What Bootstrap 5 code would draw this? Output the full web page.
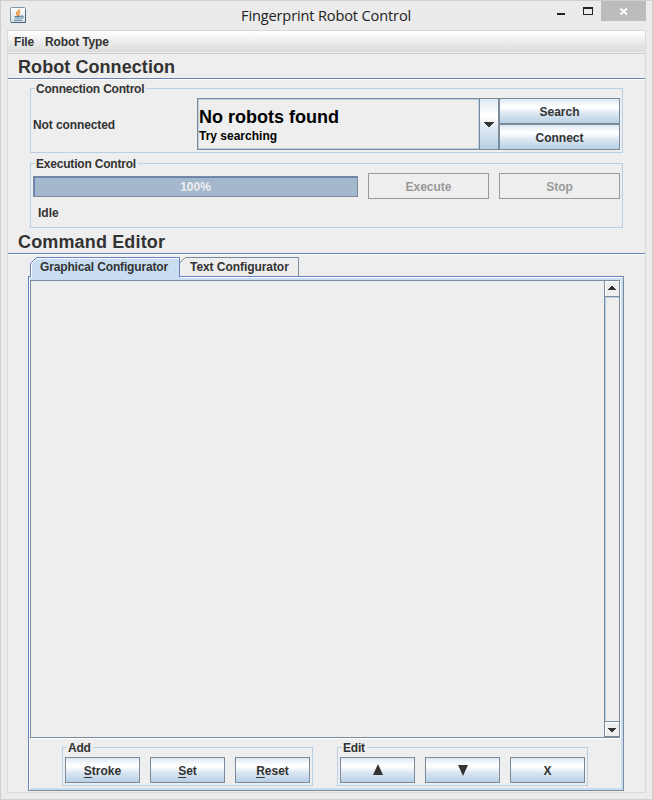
<!DOCTYPE html>
<html lang="en">
<head>
<meta charset="utf-8">
<meta name="viewport" content="width=device-width, initial-scale=1">
<title>Fingerprint Robot Control</title>
<link href="https://cdn.jsdelivr.net/npm/bootstrap@5.3.0/dist/css/bootstrap.min.css" rel="stylesheet">
<style>
:root{--steel:#7a8a99;--blue:#6382bf;--pale:#b8cfe5;--tabfill:#c8ddf2;--face:#eee;--ink:#333}
body{width:653px;height:800px;overflow:hidden;background:#ebebeb;font:bold 12px/14px "Liberation Sans",Arial,sans-serif;color:var(--ink)}
svg{display:block;flex:none}
.win{width:653px;height:800px;border:1px solid #cfcfcf;padding:0 6px 6px}
.titlebar{height:29px}
.app-icon{margin:6px 0 0 3px}
.win-title{font:14.6px/20px "Open Sans","Noto Sans",sans-serif;color:#222;padding-top:4px;letter-spacing:-.15px;left:234px;white-space:nowrap}
.win-ctl{height:20px}
.win-close{width:45px;height:20px;background:#bcbcbc;margin:0 0 0 7px}
.client{height:763px;border:1px solid #d9d9d9;background:var(--face)}
.menu-strip{height:23px;background:linear-gradient(#fff,#dadada 21px,#eee 21px);border-bottom:1px solid #ccc;padding:4px 0 0 6px;gap:11px;letter-spacing:-.15px}
.section-head{font-size:18px;line-height:22px;height:25px;padding:2px 0 0 10px;border-bottom:1px solid var(--blue);box-shadow:0 1px #fff;letter-spacing:.07px}
.group{border:1px solid var(--pale)}
.group-label{display:block;width:max-content;height:14px;margin:-7px 0 0 4px;padding:0 2px 0 1px;background:var(--face);white-space:nowrap;letter-spacing:-.2px}
.jbtn{border:1px solid var(--steel);border-radius:0;height:26px;padding:2px 0 0;font:inherit;line-height:22px;color:var(--ink);background:linear-gradient(#dde8f3 0,#fff 30%,#fff 36%,#dde8f3 58%,#b8cfe5 100%)}
.jbtn:hover{color:var(--ink);border-color:var(--steel)}
.jbtn.off{border-color:#999;color:#999;background:var(--face)}
.move-up{padding:0 0 1px}
.move-down{padding:1px 0 0}
.w121{width:121px}.w75{width:75px}
.g-conn{margin:9px 0 0 22px;width:593px;height:65px}
.g-exec{margin:10px 0 0 22px;width:593px;height:65px}
.conn-row{margin:2px 2px 0;height:52px}
.conn-status{width:164px;padding-top:2px;letter-spacing:-.1px}
.combo{width:302px;height:52px;border:1px solid var(--steel)}
.combo-text{border:1px solid var(--pale);width:281px;color:#000;padding:7px 0 0 0}
.combo-big{font-size:18px;line-height:21px}
.combo-small{line-height:16px}
.combo-arrow{width:19px;border-left:1px solid var(--steel);background:linear-gradient(#dde8f3 0,#fff 30%,#fff 36%,#dde8f3 58%,#b8cfe5 100%)}
.exec-row{margin:2px 2px 0;gap:10px}
.jbar{width:325px;height:21px;border:1px solid var(--steel);border-radius:0;background:#a3b8cc;box-shadow:inset 1px 1px var(--blue);color:#eee;line-height:19px;margin-top:3px;padding-top:1px}
.idle{margin:7px 0 0 7px}
.sec2{margin-top:2px;height:24px;line-height:21px;letter-spacing:.15px}
.tabs{height:19px;margin:3px 0 0 22px}
.jtab{height:19px;line-height:21px;letter-spacing:-.06px}
.jtab svg{left:0;top:0}
.jtab span{position:relative;left:10px}
.tab-a{width:150px;height:21px;z-index:2;letter-spacing:-.15px}
.tab-b{width:119px}
.pane{margin-left:20px;width:596px;height:515px;border:1px solid;border-color:var(--blue) var(--steel) var(--steel) var(--blue);box-shadow:inset 1px 1px #fff,inset 0 3px var(--tabfill),inset -2px -2px var(--tabfill);padding:3px 3px 0 1px}
.scrollpane{width:590px;height:458px;border:1px solid var(--steel);box-shadow:1px 1px #fff}
.sbar{width:15px;border-left:1px solid var(--steel)}
.sbtn{height:16px;border-bottom:1px solid var(--steel);box-shadow:inset 1px 1px #fff}
.strack{box-shadow:inset 1px 1px var(--pale)}
.sbtn.low{border-top:1px solid var(--steel)}
.bottom{padding:9px 0 0 32px;gap:24px}
.g-btns{width:251px;height:39px}
.btn-row{gap:10px;margin:2px 2px 0}
u{text-underline-offset:2px;text-decoration-thickness:1px}
</style>
</head>
<body>
<div class="win">
  <header class="titlebar d-flex justify-content-between position-relative">
    <svg class="app-icon" width="16" height="16" viewBox="0 0 16 16"><defs><linearGradient id="ig" x2="0" y2="1"><stop stop-color="#fff"/><stop offset="1" stop-color="#d5dee5"/></linearGradient></defs><rect x=".5" y=".5" width="15" height="15" rx="1" fill="url(#ig)" stroke="#8295a4"/><path d="M1 15.5H15.5V3" fill="none" stroke="#49657b"/><path d="M9.500 2C10 4 6 4.500 6.500 6.500 6.700 7.500 8 8 7.500 9M10.500 4.500C8.500 5.500 8 6 9 7.200 9.300 8 9 8.500 8.300 9" fill="none" stroke="#e8892c" stroke-width="1.300"/><path d="M4.500 9.500H11M5 11H10.500M4 13.200H12M11 9C14 8.500 13.500 11 11 11.300" fill="none" stroke="#5382a1" stroke-width="1.100"/></svg>
    <div class="win-title position-absolute">Fingerprint Robot Control</div>
    <div class="win-ctl d-flex">
      <svg width="38" height="20" viewBox="0 0 38 20" shape-rendering="crispEdges"><path d="M1 12h8v2H1zM27 6h10v8H27zM28 8v5h8V8z" fill="#222" fill-rule="evenodd"/></svg>
      <div class="win-close"><svg width="45" height="20" viewBox="0 0 45 20"><path d="M19.500 7.500L26 13.500M26 7.500L19.500 13.500" stroke="#fff" stroke-width="1.800"/></svg></div>
    </div>
  </header>
  <main class="client">
    <nav class="menu-strip d-flex"><span>File</span><span>Robot Type</span></nav>
    <h1 class="section-head m-0 fw-bold">Robot Connection</h1>
    <section class="group g-conn">
      <span class="group-label">Connection Control</span>
      <div class="conn-row d-flex">
        <div class="conn-status align-self-center">Not connected</div>
        <div class="combo d-flex">
          <div class="combo-text"><div class="combo-big">No robots found</div><div class="combo-small">Try searching</div></div>
          <div class="combo-arrow"><svg width="18" height="50" shape-rendering="crispEdges"><path d="M4 23h10v1H4zM5 24h8v1H5zM6 25h6v1H6zM7 26h4v1H7zM8 27h2v1H8z" fill="#333"/></svg></div>
        </div>
        <div class="d-flex flex-column"><button class="btn jbtn w121">Search</button><button class="btn jbtn w121">Connect</button></div>
      </div>
    </section>
    <section class="group g-exec">
      <span class="group-label">Execution Control</span>
      <div class="exec-row d-flex">
        <div class="jbar text-center">100%</div>
        <button class="btn jbtn off w121">Execute</button>
        <button class="btn jbtn off w121">Stop</button>
      </div>
      <div class="idle">Idle</div>
    </section>
    <h2 class="section-head sec2 mb-0 fw-bold">Command Editor</h2>
    <div class="tabs d-flex">
      <div class="jtab tab-a position-relative"><svg class="position-absolute" width="150" height="23" viewBox="0 0 150 23"><path d="M0 22V6.500L6.500 0H150V22z" fill="#c8ddf2"/><path d="M1.500 21V7L7 1.500H149" fill="none" stroke="#fff"/><path d="M.5 20V6.500L6.500.5H149.500V20" fill="none" stroke="#6382bf"/></svg><span>Graphical Configurator</span></div>
      <div class="jtab tab-b position-relative"><svg class="position-absolute" width="119" height="19" viewBox="0 0 119 19"><path d="M0 5.500L5.500.5H118.500V19" fill="none" stroke="#7a8a99"/></svg><span>Text Configurator</span></div>
    </div>
    <section class="pane">
      <div class="scrollpane d-flex justify-content-end">
        <div class="sbar d-flex flex-column">
          <div class="sbtn"><svg width="14" height="15" shape-rendering="crispEdges"><path d="M6 5h2v1H6zM5 6h4v1H5zM4 7h6v1H4zM3 8h8v1H3z" fill="#333"/></svg></div>
          <div class="strack flex-fill"></div>
          <div class="sbtn low"><svg width="14" height="14" shape-rendering="crispEdges"><path d="M3 6h8v1H3zM4 7h6v1H4zM5 8h4v1H5zM6 9h2v1H6z" fill="#333"/></svg></div>
        </div>
      </div>
      <div class="bottom d-flex">
        <div class="group g-btns"><span class="group-label">Add</span>
          <div class="btn-row d-flex"><button class="btn jbtn w75"><u>S</u>troke</button><button class="btn jbtn w75"><u>S</u>et</button><button class="btn jbtn w75"><u>R</u>eset</button></div></div>
        <div class="group g-btns"><span class="group-label">Edit</span>
          <div class="btn-row d-flex">
            <button class="btn jbtn w75 move-up" aria-label="Move up"><svg class="mx-auto" width="10" height="11"><path d="M5 0L10 11H0z" fill="#333"/></svg></button>
            <button class="btn jbtn w75 move-down" aria-label="Move down"><svg class="mx-auto" width="10" height="11"><path d="M0 0H10L5 11z" fill="#333"/></svg></button>
            <button class="btn jbtn w75">X</button></div></div>
      </div>
    </section>
  </main>
</div>
<script src="https://cdn.jsdelivr.net/npm/bootstrap@5.3.0/dist/js/bootstrap.bundle.min.js"></script>
</body>
</html>
